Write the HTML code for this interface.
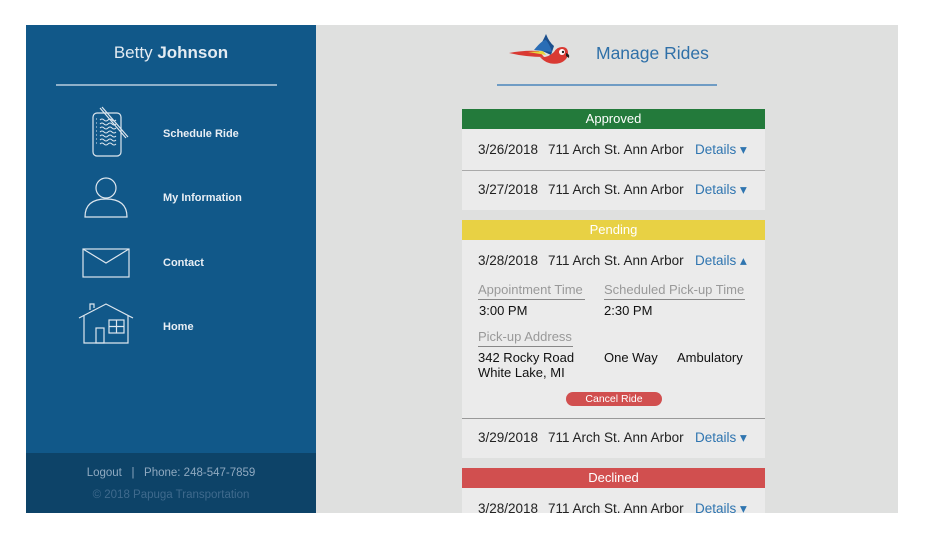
<!DOCTYPE html><html><head><style>
*{margin:0;padding:0;box-sizing:border-box}
body{width:940px;height:559px;background:#fff;font-family:"Liberation Sans",sans-serif;position:relative;overflow:hidden}
.abs{position:absolute;white-space:nowrap}
#side{left:26px;top:25px;width:290px;height:488px;background:#115889}
#foot{left:26px;top:453px;width:290px;height:60px;background:#0d4368}
#main{left:316px;top:25px;width:582px;height:488px;background:#dfe0df;overflow:hidden}
.nav{color:#e8eef4;font-size:11px;font-weight:bold}
.hdr{position:absolute;left:146px;width:303px;height:20px;color:#fff;font-size:13px;text-align:center;line-height:20px}
.row{position:absolute;left:146px;width:303px;background:#ebebeb;font-size:13.5px;color:#222}
.row span{position:absolute;white-space:nowrap}
.d{color:#2f75b0}
.lbl{position:absolute;font-size:13px;color:#999;border-bottom:1px solid #888;padding-bottom:2px;white-space:nowrap}
.val{position:absolute;font-size:13px;color:#111;white-space:nowrap}
</style></head><body>
<div id="side" class="abs"></div>
<div class="abs" style="left:26px;top:43px;width:290px;text-align:center;color:#e3ebf2;font-size:17px">Betty <b>Johnson</b></div>
<div class="abs" style="left:56px;top:84px;width:221px;height:2px;background:#8fb0c9"></div>
<svg class="abs" style="left:26px;top:100px" width="120" height="260" fill="none" stroke="#dde6ee" stroke-width="1.2">
<rect x="67" y="13" width="28" height="43" rx="4"/>
<g stroke-width="1"><path d="M70 19h1M70 23h1M70 27h1M70 31h1M70 35h1M70 39h1M70 43h1"/>
<path d="M74 20q2-2 4 0t4 0 4 0 4 0M74 24q2-2 4 0t4 0 4 0 4 0M74 28q2-2 4 0t4 0 4 0 4 0M74 32q2-2 4 0t4 0 4 0 4 0M74 36q2-2 4 0t4 0 4 0 4 0M74 40q2-2 4 0t4 0 4 0 4 0M74 44q2-2 4 0t4 0 4 0 4 0"/></g>
<path d="M74 8l26 30M76 7l26 30"/>
<circle cx="80" cy="88" r="10"/>
<path d="M59 117q0-18 21-18t21 18z"/>
<rect x="57" y="149" width="46" height="28"/><path d="M57 149l23 14 23-14"/>
<path d="M53 218l27-14 27 14M58 215v28h44v-28M64 210v-6h4v4"/>
<rect x="70" y="228" width="8" height="15"/><rect x="83" y="220" width="15" height="13"/><path d="M90.5 220v13M83 226.5h15"/>
</svg>
<div class="abs nav" style="left:163px;top:128px">Schedule Ride</div>
<div class="abs nav" style="left:163px;top:192px">My Information</div>
<div class="abs nav" style="left:163px;top:257px">Contact</div>
<div class="abs nav" style="left:163px;top:321px">Home</div>
<div id="foot" class="abs"></div>
<div class="abs" style="left:26px;top:467px;width:290px;text-align:center;color:#8fa9c0;font-size:11.5px">Logout &nbsp; | &nbsp; Phone: 248-547-7859</div>
<div class="abs" style="left:26px;top:489px;width:290px;text-align:center;color:#3f6a8d;font-size:11.5px">© 2018 Papuga Transportation</div>
<div id="main" class="abs">
<svg class="abs" style="left:190px;top:8px" width="70" height="36">
<path d="M3 20q15-3 30-2l5 6q-18 0-35-4z" fill="#d93a33"/>
<path d="M22 19l15-1 3 4z" fill="#e6d63a"/>
<path d="M32 16q5-8 8-15 3 8 8 12l-3 9z" fill="#1b4f8d"/>
<path d="M28 17q8-10 12-10 4 5 6 12z" fill="#2a6db5"/>
<path d="M34 24q8 9 20 6 8-3 8-10 0-6-6-6-5 0-8 5-6 6-14 5z" fill="#d93a33"/>
<circle cx="56" cy="19" r="3" fill="#fff"/><circle cx="57" cy="19" r="1.2" fill="#222"/>
<path d="M60 20q4 1 3 5l-3-2z" fill="#222"/>
</svg>
<div class="abs" style="left:280px;top:18px;font-size:17.5px;color:#2f70a8">Manage Rides</div>
<div class="abs" style="left:181px;top:59px;width:220px;height:2px;background:#6f9cc4"></div>
</div>
<div class="hdr" style="left:462px;top:109px;background:#237a3b">Approved</div>
<div class="row" style="left:462px;top:129px;height:41px"><span style="left:16px;top:13px">3/26/2018</span><span style="left:86px;top:13px">711 Arch St. Ann Arbor</span><span class="d" style="left:233px;top:13px">Details ▾</span></div>
<div class="abs" style="left:462px;top:170px;width:303px;height:1px;background:#aaa"></div>
<div class="row" style="left:462px;top:171px;height:39px"><span style="left:16px;top:11px">3/27/2018</span><span style="left:86px;top:11px">711 Arch St. Ann Arbor</span><span class="d" style="left:233px;top:11px">Details ▾</span></div>
<div class="hdr" style="left:462px;top:220px;background:#e8d144">Pending</div>
<div class="row" style="left:462px;top:240px;height:178px">
<span style="left:16px;top:13px">3/28/2018</span><span style="left:86px;top:13px">711 Arch St. Ann Arbor</span><span class="d" style="left:233px;top:13px">Details ▴</span>
<div class="lbl" style="left:16px;top:42px;width:107px">Appointment Time</div>
<div class="lbl" style="left:142px;top:42px;width:141px">Scheduled Pick-up Time</div>
<div class="val" style="left:17px;top:63px">3:00 PM</div>
<div class="val" style="left:142px;top:63px">2:30 PM</div>
<div class="lbl" style="left:16px;top:89px;width:95px">Pick-up Address</div>
<div class="val" style="left:16px;top:110px;line-height:15px">342 Rocky Road<br>White Lake, MI</div>
<div class="val" style="left:142px;top:110px">One Way</div>
<div class="val" style="left:215px;top:110px">Ambulatory</div>
<div class="abs" style="left:104px;top:152px;width:96px;height:14px;border-radius:7px;background:#d14f4f;color:#fff;font-size:10.5px;text-align:center;line-height:14px">Cancel Ride</div>
</div>
<div class="abs" style="left:462px;top:418px;width:303px;height:1px;background:#999"></div>
<div class="row" style="left:462px;top:419px;height:39px"><span style="left:16px;top:11px">3/29/2018</span><span style="left:86px;top:11px">711 Arch St. Ann Arbor</span><span class="d" style="left:233px;top:11px">Details ▾</span></div>
<div class="hdr" style="left:462px;top:468px;background:#d14f4f">Declined</div>
<div class="row" style="left:462px;top:488px;height:25px;overflow:hidden"><span style="left:16px;top:13px">3/28/2018</span><span style="left:86px;top:13px">711 Arch St. Ann Arbor</span><span class="d" style="left:233px;top:13px">Details ▾</span></div>
</body></html>
